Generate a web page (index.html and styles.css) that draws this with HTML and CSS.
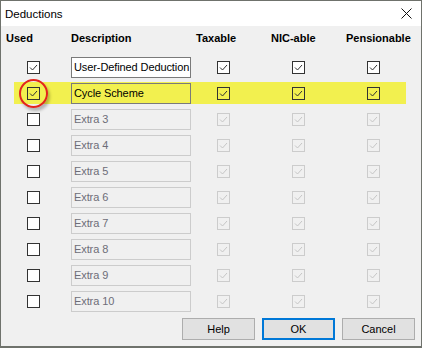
FILE: index.html
```html
<!DOCTYPE html>
<html lang="en">
<head>
    <meta charset="UTF-8">
    <title>Deductions</title>
    <link rel="stylesheet" href="styles.css">
</head>
<body>
    <div class="window">
        <div class="titlebar">
            <span class="title">Deductions</span>
            <svg class="close" width="11" height="11" viewBox="0 0 11 11">
                <path d="M0.5 0.5 L10.5 10.5 M10.5 0.5 L0.5 10.5" stroke="#111" stroke-width="1" fill="none"/>
            </svg>
        </div>

        <div class="header">
            <span>Used</span>
            <span class="h-desc">Description</span>
            <span>Taxable</span>
            <span>NIC-able</span>
            <span>Pensionable</span>
        </div>

        <div class="rows">
            <div class="row">
                <span class="cb checked"><svg viewBox="0 0 13 13"><path d="M3 6.5 L5.5 9 L10 4"/></svg></span>
                <span class="box">User-Defined Deduction</span>
                <span class="cb checked"><svg viewBox="0 0 13 13"><path d="M3 6.5 L5.5 9 L10 4"/></svg></span>
                <span class="cb checked"><svg viewBox="0 0 13 13"><path d="M3 6.5 L5.5 9 L10 4"/></svg></span>
                <span class="cb checked"><svg viewBox="0 0 13 13"><path d="M3 6.5 L5.5 9 L10 4"/></svg></span>
            </div>
            <div class="row highlight">
                <span class="cb checked"><svg viewBox="0 0 13 13"><path d="M3 6.5 L5.5 9 L10 4"/></svg><span class="ring"></span></span>
                <span class="box">Cycle Scheme</span>
                <span class="cb checked"><svg viewBox="0 0 13 13"><path d="M3 6.5 L5.5 9 L10 4"/></svg></span>
                <span class="cb checked"><svg viewBox="0 0 13 13"><path d="M3 6.5 L5.5 9 L10 4"/></svg></span>
                <span class="cb checked"><svg viewBox="0 0 13 13"><path d="M3 6.5 L5.5 9 L10 4"/></svg></span>
            </div>
            <div class="row disabled">
                <span class="cb"></span>
                <span class="box">Extra 3</span>
                <span class="cb dim"><svg viewBox="0 0 13 13"><path d="M3 6.5 L5.5 9 L10 4"/></svg></span>
                <span class="cb dim"><svg viewBox="0 0 13 13"><path d="M3 6.5 L5.5 9 L10 4"/></svg></span>
                <span class="cb dim"><svg viewBox="0 0 13 13"><path d="M3 6.5 L5.5 9 L10 4"/></svg></span>
            </div>
            <div class="row disabled">
                <span class="cb"></span>
                <span class="box">Extra 4</span>
                <span class="cb dim"><svg viewBox="0 0 13 13"><path d="M3 6.5 L5.5 9 L10 4"/></svg></span>
                <span class="cb dim"><svg viewBox="0 0 13 13"><path d="M3 6.5 L5.5 9 L10 4"/></svg></span>
                <span class="cb dim"><svg viewBox="0 0 13 13"><path d="M3 6.5 L5.5 9 L10 4"/></svg></span>
            </div>
            <div class="row disabled">
                <span class="cb"></span>
                <span class="box">Extra 5</span>
                <span class="cb dim"><svg viewBox="0 0 13 13"><path d="M3 6.5 L5.5 9 L10 4"/></svg></span>
                <span class="cb dim"><svg viewBox="0 0 13 13"><path d="M3 6.5 L5.5 9 L10 4"/></svg></span>
                <span class="cb dim"><svg viewBox="0 0 13 13"><path d="M3 6.5 L5.5 9 L10 4"/></svg></span>
            </div>
            <div class="row disabled">
                <span class="cb"></span>
                <span class="box">Extra 6</span>
                <span class="cb dim"><svg viewBox="0 0 13 13"><path d="M3 6.5 L5.5 9 L10 4"/></svg></span>
                <span class="cb dim"><svg viewBox="0 0 13 13"><path d="M3 6.5 L5.5 9 L10 4"/></svg></span>
                <span class="cb dim"><svg viewBox="0 0 13 13"><path d="M3 6.5 L5.5 9 L10 4"/></svg></span>
            </div>
            <div class="row disabled">
                <span class="cb"></span>
                <span class="box">Extra 7</span>
                <span class="cb dim"><svg viewBox="0 0 13 13"><path d="M3 6.5 L5.5 9 L10 4"/></svg></span>
                <span class="cb dim"><svg viewBox="0 0 13 13"><path d="M3 6.5 L5.5 9 L10 4"/></svg></span>
                <span class="cb dim"><svg viewBox="0 0 13 13"><path d="M3 6.5 L5.5 9 L10 4"/></svg></span>
            </div>
            <div class="row disabled">
                <span class="cb"></span>
                <span class="box">Extra 8</span>
                <span class="cb dim"><svg viewBox="0 0 13 13"><path d="M3 6.5 L5.5 9 L10 4"/></svg></span>
                <span class="cb dim"><svg viewBox="0 0 13 13"><path d="M3 6.5 L5.5 9 L10 4"/></svg></span>
                <span class="cb dim"><svg viewBox="0 0 13 13"><path d="M3 6.5 L5.5 9 L10 4"/></svg></span>
            </div>
            <div class="row disabled">
                <span class="cb"></span>
                <span class="box">Extra 9</span>
                <span class="cb dim"><svg viewBox="0 0 13 13"><path d="M3 6.5 L5.5 9 L10 4"/></svg></span>
                <span class="cb dim"><svg viewBox="0 0 13 13"><path d="M3 6.5 L5.5 9 L10 4"/></svg></span>
                <span class="cb dim"><svg viewBox="0 0 13 13"><path d="M3 6.5 L5.5 9 L10 4"/></svg></span>
            </div>
            <div class="row disabled">
                <span class="cb"></span>
                <span class="box">Extra 10</span>
                <span class="cb dim"><svg viewBox="0 0 13 13"><path d="M3 6.5 L5.5 9 L10 4"/></svg></span>
                <span class="cb dim"><svg viewBox="0 0 13 13"><path d="M3 6.5 L5.5 9 L10 4"/></svg></span>
                <span class="cb dim"><svg viewBox="0 0 13 13"><path d="M3 6.5 L5.5 9 L10 4"/></svg></span>
            </div>
        </div>

        <div class="buttons">
            <button class="btn">Help</button>
            <button class="btn default">OK</button>
            <button class="btn">Cancel</button>
        </div>
    </div>
</body>
</html>
```

FILE: styles.css
```css
html, body {
    margin: 0;
    padding: 0;
}
body {
    width: 422px;
    height: 348px;
    font-family: "Liberation Sans", Arial, sans-serif;
    font-size: 11px;
    color: #000;
    background: #f0f0f0;
}
.window {
    box-sizing: border-box;
    width: 422px;
    height: 348px;
    border: 1px solid #6f726c;
    border-bottom-width: 2px;
    background: #f0f0f0;
    display: flex;
    flex-direction: column;
}
.titlebar {
    height: 25px;
    background: #fff;
    display: flex;
    align-items: center;
    justify-content: space-between;
    padding: 0 9px 0 4px;
}
.title {
    font-size: 11.5px;
    line-height: 16px;
    margin-top: 1px;
}
.close {
    display: block;
}

/* column header */
.header {
    display: grid;
    grid-template-columns: 70px 120px 75px 75px 80px;
    margin-top: 4px;
    height: 16px;
    line-height: 16px;
    font-weight: bold;
}
.header span {
    padding-left: 5px;
}
.header .h-desc {
    padding-left: 0;
}

/* rows */
.rows {
    margin: 10px 15px 0 13px;
    display: flex;
    flex-direction: column;
    gap: 4px;
}
.row {
    display: grid;
    grid-template-columns: 57px 120px 75px 75px 65px;
    height: 22px;
    align-items: center;
}
.row.highlight {
    background: #f2f04f;
}
.cb {
    position: relative;
    box-sizing: border-box;
    width: 13px;
    height: 13px;
    margin-left: 13px;
    border: 1px solid #333;
    background: #fff;
}
.row .cb ~ .cb {
    margin-left: 26px;
}
.highlight .cb {
    background: transparent;
}
.cb svg {
    position: absolute;
    left: -1px;
    top: -1px;
    width: 13px;
    height: 13px;
}
.cb path {
    fill: none;
    stroke: #333;
    stroke-width: 1;
}
.cb.dim {
    border-color: #cccccc;
    background: transparent;
}
.cb.dim path {
    stroke: #c6c6c6;
}
.ring {
    position: absolute;
    left: -9px;
    top: -9px;
    width: 29px;
    height: 29px;
    box-sizing: border-box;
    border: 2px solid #e3241d;
    border-radius: 50%;
    box-shadow: 2px 3px 3px rgba(0, 0, 0, 0.25);
}

.box {
    box-sizing: border-box;
    height: 21px;
    line-height: 19px;
    padding-left: 2px;
    border: 1px solid #7a7a7a;
    background: #fff;
    letter-spacing: -0.1px;
    white-space: nowrap;
    overflow: hidden;
}
.highlight .box {
    background: #f2f04f;
}
.disabled .box {
    border-color: #cccccc;
    background: #f0f0f0;
    color: #6d6d78;
}

/* buttons */
.buttons {
    margin-top: 6px;
    padding-right: 6px;
    display: flex;
    justify-content: flex-end;
    gap: 7px;
}
.btn {
    box-sizing: border-box;
    width: 73px;
    height: 22px;
    padding: 0;
    font-family: inherit;
    font-size: 11px;
    color: #000;
    background: #e1e1e1;
    border: 1px solid #adadad;
}
.btn.default {
    border: 2px solid #0078d7;
}
```
